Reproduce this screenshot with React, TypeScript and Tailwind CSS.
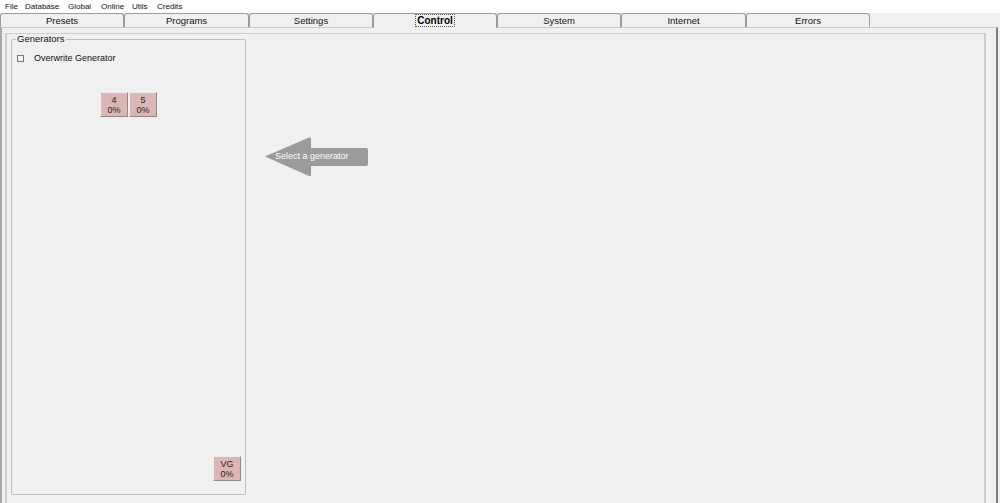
import React from "react";

const tabs: { label: string; w: string; selected?: boolean }[] = [
  { label: "Presets", w: "w-[124px]" },
  { label: "Programs", w: "w-[125px]" },
  { label: "Settings", w: "w-[124px]" },
  { label: "Control", w: "w-[124px]", selected: true },
  { label: "System", w: "w-[124px]" },
  { label: "Internet", w: "w-[125px]" },
  { label: "Errors", w: "w-[124px]" },
];

function GenButton({ top, bottom }: { top: string; bottom: string }) {
  return (
    <div className="w-[28px] h-[25px] bg-[#dcb5b5] border-l border-t border-l-[#ececec] border-t-[#ececec] border-r border-b border-r-[#8a8a8a] border-b-[#8a8a8a] flex flex-col items-center justify-center text-[9px] leading-[10px] text-[#2a2222]">
      <span>{top}</span>
      <span>{bottom}</span>
    </div>
  );
}

export default function App() {
  return (
    <div
      className="w-[1000px] h-[503px] bg-[#f0f0f0] flex flex-col overflow-hidden text-black"
      style={{ fontFamily: '"Liberation Sans", Arial, sans-serif' }}
    >
      {/* Menu bar */}
      <div className="h-[13px] bg-white flex items-center pl-[5px] text-[8px] leading-[10px] text-[#111]">
        <span className="w-[20px]">File</span>
        <span className="w-[43px]">Database</span>
        <span className="w-[33px]">Global</span>
        <span className="w-[31px]">Online</span>
        <span className="w-[25px]">Utils</span>
        <span>Credits</span>
      </div>

      {/* Tabs */}
      <div className="h-[14px] flex items-end">
        {tabs.map((t) =>
          t.selected ? (
            <div
              key={t.label}
              className={`${t.w} h-[15px] -mb-px relative z-10 bg-[#f0f0f0] border-t border-l border-r border-[#9c9c9c] rounded-t-[3px] flex items-start justify-center pt-[1px]`}
            >
              <span className="text-[10px] leading-[11px] font-bold outline outline-1 outline-dotted outline-[#555] px-[1px]">
                {t.label}
              </span>
            </div>
          ) : (
            <div
              key={t.label}
              className={`${t.w} h-[14px] bg-[#f0f0f0] border-t border-l border-r border-[#9c9c9c] rounded-t-[3px] flex items-start justify-center pt-[2px] text-[9.5px] leading-[10px] text-[#111]`}
            >
              {t.label}
            </div>
          )
        )}
      </div>

      {/* Tab page */}
      <div className="w-[998px] flex-1 border-t border-t-[#c8c8c8] border-l-2 border-l-[#a8a8a8] border-r-2 border-r-[#7c7c7c] pl-[3px] pt-[5px] flex">
        {/* Inner panel */}
        <div className="w-[981px] h-full border-l-2 border-t border-r-2 border-[#cdcdcd] flex">
          {/* Generators groupbox */}
          <fieldset className="ml-[4px] w-[235px] h-[461px] border border-[#bdbdbd] rounded-[2px] flex flex-col pl-[5px] pr-[4px] pb-[13px]">
            <legend className="-ml-[1px] px-[1px] text-[9.5px] leading-[10px] text-[#111]">
              Generators
            </legend>
            <div className="flex items-center mt-[8px] h-[12px]">
              <div className="w-[7px] h-[7px] border border-[#777] bg-[#f4f4f4]" />
              <span className="ml-[10px] text-[9px] leading-[12px] text-[#111]">
                Overwrite Generator
              </span>
            </div>
            <div className="flex justify-center gap-[1px] mt-[28px] pr-[1px]">
              <GenButton top="4" bottom="0%" />
              <GenButton top="5" bottom="0%" />
            </div>
            <div className="flex-1" />
            <div className="flex justify-end">
              <GenButton top="VG" bottom="0%" />
            </div>
          </fieldset>

          {/* Right area */}
          <div className="flex-1 pl-[19px] pt-[103px]">
            <div className="relative w-[103px] h-[40px]">
              <svg width="103" height="40" viewBox="0 0 103 40" className="absolute inset-0">
                <path
                  d="M0 19.5 L44 0.5 Q46 0 46 2 L46 11 L101 11 Q103 11 103 13 L103 27 Q103 29 101 29 L46 29 L46 38 Q46 40 44 39 Z"
                  fill="#9b9b9b"
                />
              </svg>
              <span className="absolute left-[10px] top-[13px] text-[9px] leading-[12px] text-white whitespace-nowrap">
                Select a generator
              </span>
            </div>
          </div>
        </div>
      </div>
    </div>
  );
}
